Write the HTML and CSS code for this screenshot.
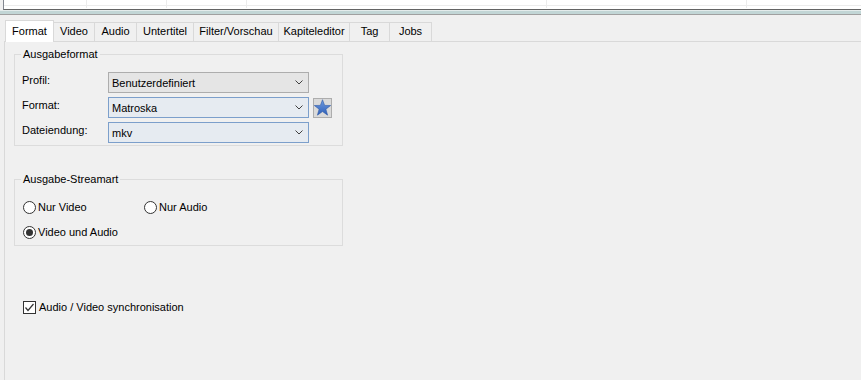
FILE: index.html
```html
<!DOCTYPE html>
<html lang="de">

<head>
    <meta charset="UTF-8">
    <meta name="viewport" content="width=device-width, initial-scale=1.0">
    <title>Ausgabe</title>
    <link rel="stylesheet" href="styles.css">
</head>

<body>

    <!-- job list (only its bottom edge is visible) -->
    <div class="job-list">
        <div class="job-row">
            <span class="cell c1"></span>
            <span class="cell c2"></span>
            <span class="cell c3"></span>
            <span class="cell c4"></span>
            <span class="cell c5"></span>
            <span class="cell c6"></span>
        </div>
    </div>
    <div class="splitter"></div>

    <div class="tabs">
        <div class="tab active t-format">Format</div>
        <div class="tab t-video">Video</div>
        <div class="tab t-audio">Audio</div>
        <div class="tab t-sub">Untertitel</div>
        <div class="tab t-filter">Filter/Vorschau</div>
        <div class="tab t-chapter">Kapiteleditor</div>
        <div class="tab t-tag">Tag</div>
        <div class="tab t-jobs">Jobs</div>
    </div>

    <div class="panel">

        <fieldset class="group group-format">
            <legend>Ausgabeformat</legend>
            <div class="form-grid">
                <label>Profil:</label>
                <div class="combo">
                    <span>Benutzerdefiniert</span>
                    <svg class="chev" width="8" height="5" viewBox="0 0 8 5"><polyline points="0.5,0.5 4,4 7.5,0.5" fill="none" stroke="#404040" stroke-width="1"/></svg>
                </div>
                <span></span>

                <label>Format:</label>
                <div class="combo focus">
                    <span>Matroska</span>
                    <svg class="chev" width="8" height="5" viewBox="0 0 8 5"><polyline points="0.5,0.5 4,4 7.5,0.5" fill="none" stroke="#404040" stroke-width="1"/></svg>
                </div>
                <button class="star-btn" title="Favorit">
                    <svg width="17" height="17" viewBox="0 0 24 24">
                        <defs>
                            <linearGradient id="sg" x1="0" y1="0" x2="0" y2="1">
                                <stop offset="0" stop-color="#6f9be0"/>
                                <stop offset="1" stop-color="#2e5fb8"/>
                            </linearGradient>
                        </defs>
                        <polygon points="12,1 15,9 23.5,9.2 16.8,14.4 19.2,22.8 12,17.8 4.8,22.8 7.2,14.4 0.5,9.2 9,9" fill="url(#sg)" stroke="#2a56a6" stroke-width="0.8"/>
                    </svg>
                </button>

                <label>Dateiendung:</label>
                <div class="combo focus">
                    <span>mkv</span>
                    <svg class="chev" width="8" height="5" viewBox="0 0 8 5"><polyline points="0.5,0.5 4,4 7.5,0.5" fill="none" stroke="#404040" stroke-width="1"/></svg>
                </div>
                <span></span>
            </div>
        </fieldset>

        <fieldset class="group group-stream">
            <legend>Ausgabe-Streamart</legend>
            <div class="radio-grid">
                <label class="option"><span class="radio"></span>Nur Video</label>
                <label class="option"><span class="radio"></span>Nur Audio</label>
                <label class="option"><span class="radio checked"></span>Video und Audio</label>
            </div>
        </fieldset>

        <label class="option sync">
            <span class="check">
                <svg width="11" height="11" viewBox="0 0 11 11"><polyline points="1.5,5.5 4,8.5 9.5,2" fill="none" stroke="#333" stroke-width="1.2"/></svg>
            </span>
            Audio / Video synchronisation
        </label>

    </div>

</body>

</html>
```

FILE: styles.css
```css
body {
    margin: 0;
    background-color: #f0f0f0;
    font-family: "Liberation Sans", Arial, sans-serif;
    font-size: 11px;
    color: #000;
    overflow: hidden;
    height: 380px;
}

/* list at the top */
.job-list {
    margin-left: 3px;
    height: 9px;
    background-color: #fff;
    border-left: 1px solid #828790;
    border-bottom: 1px solid #646464;
}

.job-row {
    display: flex;
    height: 5px;
    border-bottom: 1px solid #ececec;
}

.cell {
    border-right: 1px solid #ececec;
    height: 8px;
}

.c1 { width: 82px; }
.c2 { width: 79px; }
.c3 { width: 79px; }
.c4 { width: 299px; }
.c5 { width: 199px; }
.c6 { flex: 1; border-right: none; }

.splitter {
    height: 3px;
    background-color: #c2d6d6;
    border-top: 1px solid #e4ecec;
    border-bottom: 1px solid #a0a0a0;
}

/* tab strip */
.tabs {
    display: flex;
    align-items: flex-end;
    margin: 5px 0 0 5px;
    height: 21px;
    position: relative;
    z-index: 1;
}

.tab {
    box-sizing: border-box;
    height: 19px;
    line-height: 17px;
    text-align: center;
    border: 1px solid #d9d9d9;
    border-bottom: none;
    margin-left: -1px;
    background-color: #f0f0f0;
    white-space: nowrap;
}

.tab.active {
    height: 22px;
    line-height: 21px;
    margin-left: 0;
    margin-bottom: -1px;
    background-color: #fff;
    position: relative;
    z-index: 2;
}

.t-format { width: 49px; }
.t-video { width: 41px; border-left: none; margin-left: 0; }
.t-audio { width: 43px; }
.t-sub { width: 58px; }
.t-filter { width: 86px; }
.t-chapter { width: 72px; }
.t-tag { width: 41px; }
.t-jobs { width: 43px; }

.panel {
    margin-left: 4px;
    height: 340px;
    border-top: 1px solid #d9d9d9;
    border-left: 1px solid #d9d9d9;
    padding: 5px 0 0 9px;
}

/* group boxes */
.group {
    box-sizing: border-box;
    width: 329px;
    margin: 0;
    border: 1px solid #dcdcdc;
    padding: 10px 7px 2px 7px;
}

.group legend {
    padding: 0 2px;
    margin-left: -1px;
    line-height: 15px;
}

.group-stream {
    margin-top: 26px;
    padding: 12px 7px 5px 7px;
}

.form-grid {
    display: grid;
    grid-template-columns: 86px 201px 23px;
    row-gap: 4px;
    align-items: center;
}

.form-grid label {
    line-height: 15px;
    margin-top: -5px;
}

.combo {
    box-sizing: border-box;
    height: 21px;
    display: flex;
    align-items: center;
    justify-content: space-between;
    padding: 0 5px 0 3px;
    background-color: #e5e5e5;
    border: 1px solid #adadad;
}

.combo.focus {
    background-color: #e6ebf1;
    border-color: #7c9fcb;
}

.chev {
    display: block;
}

.star-btn {
    box-sizing: border-box;
    width: 19px;
    height: 20px;
    margin-left: 4px;
    padding: 0;
    display: flex;
    align-items: center;
    justify-content: center;
    background-color: #dadada;
    border: 1px solid #adadad;
}

/* radios and checkbox */
.radio-grid {
    display: grid;
    grid-template-columns: 121px 1fr;
    row-gap: 9px;
}

.option {
    display: flex;
    align-items: center;
    height: 16px;
    line-height: 16px;
    margin-left: 1px;
}

.radio {
    box-sizing: border-box;
    width: 13px;
    height: 13px;
    border: 1px solid #333;
    border-radius: 50%;
    background-color: #fff;
    margin-right: 2px;
    display: flex;
    align-items: center;
    justify-content: center;
}

.radio.checked::after {
    content: "";
    width: 7px;
    height: 7px;
    border-radius: 50%;
    background-color: #333;
}

.sync {
    margin: 53px 0 0 9px;
}

.check {
    box-sizing: border-box;
    width: 13px;
    height: 13px;
    border: 1px solid #333;
    background-color: #fff;
    margin-right: 3px;
    display: flex;
    align-items: center;
    justify-content: center;
}
```
